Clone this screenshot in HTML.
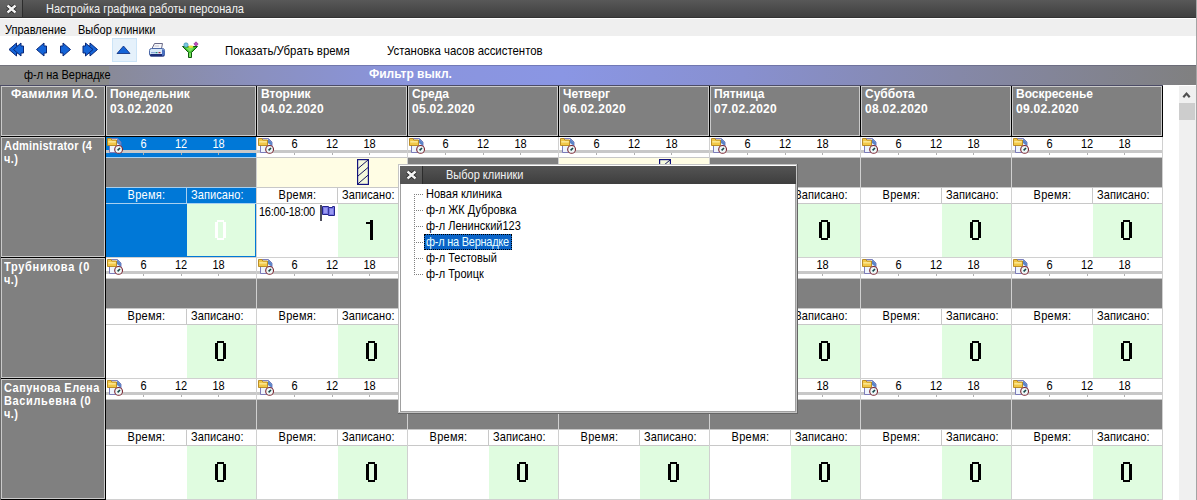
<!DOCTYPE html>
<html><head><meta charset="utf-8"><style>
html,body{margin:0;padding:0}
body{width:1197px;height:500px;position:relative;overflow:hidden;background:#fff;font-family:"Liberation Sans",sans-serif}
body>div,body>span,body>svg{position:absolute}
.t{white-space:nowrap;line-height:1.15}
div{box-sizing:border-box}
</style></head><body>
<div style="left:0px;top:0px;width:1197px;height:18px;background:linear-gradient(#585858,#3e3e3e)"></div>
<div style="left:0px;top:0px;width:22px;height:18px;background:linear-gradient(#666,#555)"></div>
<div style="left:22px;top:0px;width:1px;height:18px;background:#2c2c2c"></div>
<div style="left:0px;top:17px;width:1197px;height:1px;background:#333"></div>
<svg style="position:absolute;left:6px;top:4px" width="11" height="10" viewBox="0 0 11 10"><path d="M1.5 1.5 L9.5 8.5 M9.5 1.5 L1.5 8.5" stroke="#1e1e1e" stroke-width="4" stroke-linecap="butt"/><path d="M1.5 1.5 L9.5 8.5 M9.5 1.5 L1.5 8.5" stroke="#f4f4f4" stroke-width="2.4" stroke-linecap="butt"/></svg>
<span class="t" style="left:46px;top:3px;font-size:11px;font-weight:normal;color:#f2f2f2;transform:scaleY(1.12);transform-origin:0 10px;">Настройка графика работы персонала</span>
<div style="left:0px;top:18px;width:1197px;height:1px;background:#fff"></div>
<div style="left:0px;top:19px;width:1197px;height:17px;background:#efefef"></div>
<span class="t" style="left:5px;top:24px;font-size:11px;font-weight:normal;color:#000;transform:scaleY(1.12);transform-origin:0 10px;">Управление</span>
<span class="t" style="left:78px;top:24px;font-size:11px;font-weight:normal;color:#000;transform:scaleY(1.12);transform-origin:0 10px;">Выбор клиники</span>
<div style="left:0px;top:36px;width:1197px;height:29px;background:#fff"></div>
<svg style="position:absolute;left:0;top:0" width="210" height="64"><path d="M9 49.5 L16.5 43 L16.5 46 L19 46 L19 53 L16.5 53 L16.5 56 Z" fill="#1464d8" stroke="#0a2878" stroke-width="1"/><path d="M13.5 49.5 L21.0 43 L21.0 46 L23.5 46 L23.5 53 L21.0 53 L21.0 56 Z" fill="#1464d8" stroke="#0a2878" stroke-width="1"/><path d="M36.5 49.5 L44.0 43 L44.0 46 L46.5 46 L46.5 53 L44.0 53 L44.0 56 Z" fill="#1464d8" stroke="#0a2878" stroke-width="1"/><path d="M70.5 49.5 L63.0 43 L63.0 46 L60.5 46 L60.5 53 L63.0 53 L63.0 56 Z" fill="#1464d8" stroke="#0a2878" stroke-width="1"/><path d="M97.5 49.5 L90.0 43 L90.0 46 L87.5 46 L87.5 53 L90.0 53 L90.0 56 Z" fill="#1464d8" stroke="#0a2878" stroke-width="1"/><path d="M93 49.5 L85.5 43 L85.5 46 L83 46 L83 53 L85.5 53 L85.5 56 Z" fill="#1464d8" stroke="#0a2878" stroke-width="1"/><rect x="112.5" y="38.5" width="24" height="23" fill="#e5f1fb" stroke="#cce4f7"/><path d="M117 53.5 L123.5 46 L130 53.5 Z" fill="#1464d8" stroke="#0a2878" stroke-width="0.8"/><path d="M154.5 43.5 L162.5 43.5 L161.5 48.5 L152 48.5 Z" fill="#f6f6f8" stroke="#6a6a88" stroke-width="1"/><path d="M154.5 46 H159" stroke="#b8b8c8" stroke-width="0.8"/><rect x="149.5" y="48.5" width="15" height="7.5" rx="2" fill="#d8e8f8" stroke="#4a68a8" stroke-width="1"/><rect x="150" y="54" width="14.5" height="2.5" rx="1" fill="#1c2c78"/><path d="M162 49 L164.5 50.5 L164.5 55 L162 56 Z" fill="#4a70c0"/><rect x="151" y="52" width="4" height="1.2" fill="#8aa8d8"/><rect x="155.5" y="52" width="2" height="1.2" fill="#208878"/><rect x="158.5" y="52" width="2" height="1.2" fill="#a02040"/><path d="M182.5 46.5 L197.5 46.5 L191.5 52.5 L191.5 57.5 L188.5 57.5 L188.5 52.5 Z" fill="#3cbc2c" stroke="#0e5a0e" stroke-width="1" stroke-linejoin="round"/><path d="M186 48 L194 48 L190.5 51.5 L189.5 51.5 Z" fill="#80e060"/><rect x="189.3" y="53" width="1.4" height="4" fill="#90f070"/><ellipse cx="190.8" cy="46.8" rx="2.6" ry="1.3" fill="#e8e040"/><circle cx="186" cy="45" r="2.2" fill="#78c8e0" stroke="#3a88a8" stroke-width="0.6"/><path d="M196 41.8 L198.2 44 L196 46.2 L193.8 44 Z" fill="#c048c0" stroke="#802080" stroke-width="0.6"/></svg>
<span class="t" style="left:225px;top:45px;font-size:11.4px;font-weight:normal;color:#000;transform:scaleY(1.12);transform-origin:0 10px;">Показать/Убрать время</span>
<span class="t" style="left:387px;top:45px;font-size:11.4px;font-weight:normal;color:#000;transform:scaleY(1.12);transform-origin:0 10px;">Установка часов ассистентов</span>
<div style="left:0px;top:65px;width:1197px;height:21px;background:linear-gradient(to right,#8b8b8b 0%,#898a98 9%,#8a90c0 22%,#8a94dc 33%,#8a96e4 47%,#8890d0 62%,#8588a8 80%,#808080 100%)"></div>
<div style="left:0px;top:66px;width:109px;height:19px;background:#8a8a8a"></div>
<div style="left:0px;top:65px;width:1197px;height:1px;background:rgba(60,60,90,0.3)"></div>
<span class="t" style="left:24px;top:69px;font-size:11px;font-weight:normal;color:#000;transform:scaleY(1.12);transform-origin:0 10px;">ф-л на Вернадке</span>
<span class="t" style="left:369px;top:68px;font-size:12px;font-weight:bold;color:#fff;">Фильтр выкл.</span>
<div style="left:0px;top:85px;width:1163px;height:415px;background:#000"></div>
<div style="left:0px;top:85px;width:1197px;height:1px;background:#4c4c66"></div>
<div style="left:0px;top:86px;width:1px;height:414px;background:#6a6a6a"></div>
<div style="left:1px;top:86px;width:104px;height:50px;background:#808080;border:1px solid #cacaca"></div>
<div style="left:106px;top:86px;width:150px;height:50px;background:#808080;border:1px solid #cacaca"></div>
<span class="t" style="left:110px;top:88px;font-size:12px;font-weight:bold;color:#fff;">Понедельник</span>
<span class="t" style="left:110px;top:103px;font-size:12px;font-weight:bold;color:#fff;letter-spacing:0.3px">03.02.2020</span>
<div style="left:257px;top:86px;width:150px;height:50px;background:#808080;border:1px solid #cacaca"></div>
<span class="t" style="left:261px;top:88px;font-size:12px;font-weight:bold;color:#fff;">Вторник</span>
<span class="t" style="left:261px;top:103px;font-size:12px;font-weight:bold;color:#fff;letter-spacing:0.3px">04.02.2020</span>
<div style="left:408px;top:86px;width:150px;height:50px;background:#808080;border:1px solid #cacaca"></div>
<span class="t" style="left:412px;top:88px;font-size:12px;font-weight:bold;color:#fff;">Среда</span>
<span class="t" style="left:412px;top:103px;font-size:12px;font-weight:bold;color:#fff;letter-spacing:0.3px">05.02.2020</span>
<div style="left:559px;top:86px;width:150px;height:50px;background:#808080;border:1px solid #cacaca"></div>
<span class="t" style="left:563px;top:88px;font-size:12px;font-weight:bold;color:#fff;">Четверг</span>
<span class="t" style="left:563px;top:103px;font-size:12px;font-weight:bold;color:#fff;letter-spacing:0.3px">06.02.2020</span>
<div style="left:710px;top:86px;width:150px;height:50px;background:#808080;border:1px solid #cacaca"></div>
<span class="t" style="left:714px;top:88px;font-size:12px;font-weight:bold;color:#fff;">Пятница</span>
<span class="t" style="left:714px;top:103px;font-size:12px;font-weight:bold;color:#fff;letter-spacing:0.3px">07.02.2020</span>
<div style="left:861px;top:86px;width:150px;height:50px;background:#808080;border:1px solid #cacaca"></div>
<span class="t" style="left:865px;top:88px;font-size:12px;font-weight:bold;color:#fff;">Суббота</span>
<span class="t" style="left:865px;top:103px;font-size:12px;font-weight:bold;color:#fff;letter-spacing:0.3px">08.02.2020</span>
<div style="left:1012px;top:86px;width:150px;height:50px;background:#808080;border:1px solid #cacaca"></div>
<span class="t" style="left:1016px;top:88px;font-size:12px;font-weight:bold;color:#fff;">Воскресенье</span>
<span class="t" style="left:1016px;top:103px;font-size:12px;font-weight:bold;color:#fff;letter-spacing:0.3px">09.02.2020</span>
<span class="t" style="left:11px;top:88px;font-size:12px;font-weight:bold;color:#fff;letter-spacing:0.3px">Фамилия И.О.</span>
<div style="left:1px;top:137px;width:104px;height:120px;background:#808080;border:1px solid #cacaca"></div>
<span class="t" style="left:4px;top:140px;font-size:11px;font-weight:bold;color:#fff;transform:scaleY(1.12);transform-origin:0 10px;letter-spacing:0.2px">Administrator (4</span>
<span class="t" style="left:4px;top:153px;font-size:11px;font-weight:bold;color:#fff;transform:scaleY(1.12);transform-origin:0 10px;letter-spacing:0.4px">ч.)</span>
<div style="left:1px;top:258px;width:104px;height:120px;background:#808080;border:1px solid #cacaca"></div>
<span class="t" style="left:4px;top:261px;font-size:11px;font-weight:bold;color:#fff;transform:scaleY(1.12);transform-origin:0 10px;letter-spacing:0.7px">Трубникова (0</span>
<span class="t" style="left:4px;top:274px;font-size:11px;font-weight:bold;color:#fff;transform:scaleY(1.12);transform-origin:0 10px;letter-spacing:0.4px">ч.)</span>
<div style="left:1px;top:379px;width:104px;height:120px;background:#808080;border:1px solid #cacaca"></div>
<span class="t" style="left:4px;top:382px;font-size:11px;font-weight:bold;color:#fff;transform:scaleY(1.12);transform-origin:0 10px;letter-spacing:0.47px">Сапунова Елена</span>
<span class="t" style="left:4px;top:395px;font-size:11px;font-weight:bold;color:#fff;transform:scaleY(1.12);transform-origin:0 10px;letter-spacing:0.63px">Васильевна (0</span>
<span class="t" style="left:4px;top:408px;font-size:11px;font-weight:bold;color:#fff;transform:scaleY(1.12);transform-origin:0 10px;letter-spacing:0.4px">ч.)</span>
<div style="left:106px;top:137px;width:150px;height:120px;background:#0078d7"></div>
<div style="left:106px;top:150px;width:150px;height:3px;background:#c8c8c8"></div>
<div style="left:143px;top:153px;width:1px;height:2px;background:#b0b0b0"></div>
<span class="t" style="left:140.0px;top:137px;width:7px;text-align:center;font-size:11px;transform:scaleY(1.12);transform-origin:0 0;color:#fff">6</span>
<div style="left:181px;top:153px;width:1px;height:2px;background:#b0b0b0"></div>
<span class="t" style="left:174.5px;top:137px;width:13px;text-align:center;font-size:11px;transform:scaleY(1.12);transform-origin:0 0;color:#fff">12</span>
<div style="left:218px;top:153px;width:1px;height:2px;background:#b0b0b0"></div>
<span class="t" style="left:212.0px;top:137px;width:13px;text-align:center;font-size:11px;transform:scaleY(1.12);transform-origin:0 0;color:#fff">18</span>
<div style="left:106px;top:157px;width:150px;height:1px;background:#a8d0f0"></div>
<svg style="position:absolute;left:106px;top:137px" width="17" height="17" viewBox="0 0 17 17">
<path d="M3.5 1.5 L11.5 1.5 L15 5 L15 15.5 L3.5 15.5 Z" fill="#eef4fc" stroke="#7070b4" stroke-width="0.9"/>
<path d="M11 1.5 L15 5.5 L15 9 L11 6 Z" fill="#5a84c8"/>
<path d="M1.5 1.5 L5 1.5 L5.8 3 L10.5 3 L10.5 8.5 L1.5 8.5 Z" fill="#f2c848" stroke="#b48418" stroke-width="0.9"/>
<rect x="2.3" y="4" width="7.5" height="1.6" fill="#fae690"/>
<circle cx="12.6" cy="12.4" r="3.9" fill="#eef8f8" stroke="#7c2430" stroke-width="1.1"/>
<path d="M11.6 13.4 L14 11" stroke="#184848" stroke-width="1.6"/>
</svg>
<div style="left:106px;top:158px;width:150px;height:29px;background:#808080"></div>
<div style="left:106px;top:187px;width:150px;height:1px;background:#a8d0f0"></div>
<div style="left:106px;top:188px;width:150px;height:15px;background:#0078d7"></div>
<div style="left:186px;top:188px;width:1px;height:15px;background:#a8d0f0"></div>
<span class="t" style="left:106px;top:189px;width:81px;text-align:center;letter-spacing:0.3px;font-size:11px;transform:scaleY(1.12);transform-origin:0 10px;color:#fff">Время:</span>
<span class="t" style="left:191px;top:189px;letter-spacing:0.1px;font-size:11px;transform:scaleY(1.12);transform-origin:0 10px;color:#fff">Записано:</span>
<div style="left:106px;top:203px;width:150px;height:1px;background:#a8d0f0"></div>
<div style="left:106px;top:204px;width:80px;height:53px;background:#0078d7"></div>
<div style="left:187px;top:204px;width:69px;height:53px;background:#e0fce0"></div>
<div style="left:255px;top:204px;width:1px;height:53px;background:#0078d7"></div>
<div style="left:187px;top:256px;width:69px;height:1px;background:#0078d7"></div>
<svg style="position:absolute;left:215px;top:220px" width="11" height="20" shape-rendering="crispEdges"><g fill="#fff"><rect x="2" y="0" width="7" height="2"/><rect x="0" y="2" width="3" height="16"/><rect x="8" y="2" width="3" height="16"/><rect x="2" y="18" width="7" height="2"/></g></svg>
<div style="left:256px;top:137px;width:1px;height:121px;background:#d0d0d0"></div>
<div style="left:106px;top:257px;width:151px;height:1px;background:#d0d0d0"></div>
<div style="left:257px;top:137px;width:150px;height:120px;background:#fff"></div>
<div style="left:257px;top:150px;width:150px;height:3px;background:#c8c8c8"></div>
<div style="left:294px;top:153px;width:1px;height:2px;background:#b0b0b0"></div>
<span class="t" style="left:291.0px;top:137px;width:7px;text-align:center;font-size:11px;transform:scaleY(1.12);transform-origin:0 0;color:#000">6</span>
<div style="left:332px;top:153px;width:1px;height:2px;background:#b0b0b0"></div>
<span class="t" style="left:325.5px;top:137px;width:13px;text-align:center;font-size:11px;transform:scaleY(1.12);transform-origin:0 0;color:#000">12</span>
<div style="left:369px;top:153px;width:1px;height:2px;background:#b0b0b0"></div>
<span class="t" style="left:363.0px;top:137px;width:13px;text-align:center;font-size:11px;transform:scaleY(1.12);transform-origin:0 0;color:#000">18</span>
<div style="left:257px;top:157px;width:150px;height:1px;background:#c8c8c8"></div>
<svg style="position:absolute;left:257px;top:137px" width="17" height="17" viewBox="0 0 17 17">
<path d="M3.5 1.5 L11.5 1.5 L15 5 L15 15.5 L3.5 15.5 Z" fill="#eef4fc" stroke="#7070b4" stroke-width="0.9"/>
<path d="M11 1.5 L15 5.5 L15 9 L11 6 Z" fill="#5a84c8"/>
<path d="M1.5 1.5 L5 1.5 L5.8 3 L10.5 3 L10.5 8.5 L1.5 8.5 Z" fill="#f2c848" stroke="#b48418" stroke-width="0.9"/>
<rect x="2.3" y="4" width="7.5" height="1.6" fill="#fae690"/>
<circle cx="12.6" cy="12.4" r="3.9" fill="#eef8f8" stroke="#7c2430" stroke-width="1.1"/>
<path d="M11.6 13.4 L14 11" stroke="#184848" stroke-width="1.6"/>
</svg>
<div style="left:257px;top:158px;width:150px;height:29px;background:#fffde4"></div>
<svg style="position:absolute;left:357px;top:159px" width="12" height="26" viewBox="0 0 12 26"><rect x="0.6" y="0.6" width="10.8" height="24.8" fill="#f4f9dc" stroke="#141480" stroke-width="1.2"/><path d="M1 9.5 L11 1 M1 17 L11 8.5 M1 24.8 L11 16.2" stroke="#161660" stroke-width="1"/></svg>
<div style="left:257px;top:187px;width:150px;height:1px;background:#c8c8c8"></div>
<div style="left:257px;top:188px;width:150px;height:15px;background:#fff"></div>
<div style="left:337px;top:188px;width:1px;height:15px;background:#c8c8c8"></div>
<span class="t" style="left:257px;top:189px;width:81px;text-align:center;letter-spacing:0.3px;font-size:11px;transform:scaleY(1.12);transform-origin:0 10px;color:#000">Время:</span>
<span class="t" style="left:342px;top:189px;letter-spacing:0.1px;font-size:11px;transform:scaleY(1.12);transform-origin:0 10px;color:#000">Записано:</span>
<div style="left:257px;top:203px;width:150px;height:1px;background:#c8c8c8"></div>
<div style="left:257px;top:204px;width:80px;height:53px;background:#fff"></div>
<div style="left:338px;top:204px;width:69px;height:53px;background:#e0fce0"></div>
<svg style="position:absolute;left:366px;top:220px" width="7" height="20" shape-rendering="crispEdges"><g fill="#000"><rect x="4" y="0" width="3" height="20"/><rect x="0" y="2" width="4" height="2"/></g></svg>
<span class="t" style="left:259px;top:206px;font-size:11px;letter-spacing:-0.25px;transform:scaleY(1.12);transform-origin:0 10px;color:#000">16:00-18:00</span>
<svg style="position:absolute;left:320px;top:204px" width="17" height="18" viewBox="0 0 17 18"><rect x="0" y="1" width="2" height="16" fill="#4e4e5c"/><path d="M2.5 2.5 H8.5 V3.5 H12.5 V2.5 H14.5 V11.5 H8.5 V10.5 H2.5 Z" fill="#7878e6" stroke="#24248a" stroke-width="1"/><path d="M8.5 3.5 V10.5" stroke="#3a3aa0" stroke-width="1"/><rect x="4" y="4" width="3" height="5" fill="#9a9af0"/><rect x="10" y="5" width="3" height="5" fill="#9a9af0"/></svg>
<div style="left:407px;top:137px;width:1px;height:121px;background:#d0d0d0"></div>
<div style="left:257px;top:257px;width:151px;height:1px;background:#d0d0d0"></div>
<div style="left:408px;top:137px;width:150px;height:120px;background:#fff"></div>
<div style="left:408px;top:150px;width:150px;height:3px;background:#c8c8c8"></div>
<div style="left:445px;top:153px;width:1px;height:2px;background:#b0b0b0"></div>
<span class="t" style="left:442.0px;top:137px;width:7px;text-align:center;font-size:11px;transform:scaleY(1.12);transform-origin:0 0;color:#000">6</span>
<div style="left:483px;top:153px;width:1px;height:2px;background:#b0b0b0"></div>
<span class="t" style="left:476.5px;top:137px;width:13px;text-align:center;font-size:11px;transform:scaleY(1.12);transform-origin:0 0;color:#000">12</span>
<div style="left:520px;top:153px;width:1px;height:2px;background:#b0b0b0"></div>
<span class="t" style="left:514.0px;top:137px;width:13px;text-align:center;font-size:11px;transform:scaleY(1.12);transform-origin:0 0;color:#000">18</span>
<div style="left:408px;top:157px;width:150px;height:1px;background:#c8c8c8"></div>
<svg style="position:absolute;left:408px;top:137px" width="17" height="17" viewBox="0 0 17 17">
<path d="M3.5 1.5 L11.5 1.5 L15 5 L15 15.5 L3.5 15.5 Z" fill="#eef4fc" stroke="#7070b4" stroke-width="0.9"/>
<path d="M11 1.5 L15 5.5 L15 9 L11 6 Z" fill="#5a84c8"/>
<path d="M1.5 1.5 L5 1.5 L5.8 3 L10.5 3 L10.5 8.5 L1.5 8.5 Z" fill="#f2c848" stroke="#b48418" stroke-width="0.9"/>
<rect x="2.3" y="4" width="7.5" height="1.6" fill="#fae690"/>
<circle cx="12.6" cy="12.4" r="3.9" fill="#eef8f8" stroke="#7c2430" stroke-width="1.1"/>
<path d="M11.6 13.4 L14 11" stroke="#184848" stroke-width="1.6"/>
</svg>
<div style="left:408px;top:158px;width:150px;height:29px;background:#808080"></div>
<div style="left:408px;top:187px;width:150px;height:1px;background:#c8c8c8"></div>
<div style="left:408px;top:188px;width:150px;height:15px;background:#fff"></div>
<div style="left:488px;top:188px;width:1px;height:15px;background:#c8c8c8"></div>
<span class="t" style="left:408px;top:189px;width:81px;text-align:center;letter-spacing:0.3px;font-size:11px;transform:scaleY(1.12);transform-origin:0 10px;color:#000">Время:</span>
<span class="t" style="left:493px;top:189px;letter-spacing:0.1px;font-size:11px;transform:scaleY(1.12);transform-origin:0 10px;color:#000">Записано:</span>
<div style="left:408px;top:203px;width:150px;height:1px;background:#c8c8c8"></div>
<div style="left:408px;top:204px;width:80px;height:53px;background:#fff"></div>
<div style="left:489px;top:204px;width:69px;height:53px;background:#e0fce0"></div>
<svg style="position:absolute;left:517px;top:220px" width="11" height="20" shape-rendering="crispEdges"><g fill="#000"><rect x="2" y="0" width="7" height="2"/><rect x="0" y="2" width="3" height="16"/><rect x="8" y="2" width="3" height="16"/><rect x="2" y="18" width="7" height="2"/></g></svg>
<div style="left:558px;top:137px;width:1px;height:121px;background:#d0d0d0"></div>
<div style="left:408px;top:257px;width:151px;height:1px;background:#d0d0d0"></div>
<div style="left:559px;top:137px;width:150px;height:120px;background:#fff"></div>
<div style="left:559px;top:150px;width:150px;height:3px;background:#c8c8c8"></div>
<div style="left:596px;top:153px;width:1px;height:2px;background:#b0b0b0"></div>
<span class="t" style="left:593.0px;top:137px;width:7px;text-align:center;font-size:11px;transform:scaleY(1.12);transform-origin:0 0;color:#000">6</span>
<div style="left:634px;top:153px;width:1px;height:2px;background:#b0b0b0"></div>
<span class="t" style="left:627.5px;top:137px;width:13px;text-align:center;font-size:11px;transform:scaleY(1.12);transform-origin:0 0;color:#000">12</span>
<div style="left:671px;top:153px;width:1px;height:2px;background:#b0b0b0"></div>
<span class="t" style="left:665.0px;top:137px;width:13px;text-align:center;font-size:11px;transform:scaleY(1.12);transform-origin:0 0;color:#000">18</span>
<div style="left:559px;top:157px;width:150px;height:1px;background:#c8c8c8"></div>
<svg style="position:absolute;left:559px;top:137px" width="17" height="17" viewBox="0 0 17 17">
<path d="M3.5 1.5 L11.5 1.5 L15 5 L15 15.5 L3.5 15.5 Z" fill="#eef4fc" stroke="#7070b4" stroke-width="0.9"/>
<path d="M11 1.5 L15 5.5 L15 9 L11 6 Z" fill="#5a84c8"/>
<path d="M1.5 1.5 L5 1.5 L5.8 3 L10.5 3 L10.5 8.5 L1.5 8.5 Z" fill="#f2c848" stroke="#b48418" stroke-width="0.9"/>
<rect x="2.3" y="4" width="7.5" height="1.6" fill="#fae690"/>
<circle cx="12.6" cy="12.4" r="3.9" fill="#eef8f8" stroke="#7c2430" stroke-width="1.1"/>
<path d="M11.6 13.4 L14 11" stroke="#184848" stroke-width="1.6"/>
</svg>
<div style="left:559px;top:158px;width:150px;height:29px;background:#fffde4"></div>
<svg style="position:absolute;left:659px;top:159px" width="12" height="26" viewBox="0 0 12 26"><rect x="0.6" y="0.6" width="10.8" height="24.8" fill="#f4f9dc" stroke="#141480" stroke-width="1.2"/><path d="M1 9.5 L11 1 M1 17 L11 8.5 M1 24.8 L11 16.2" stroke="#161660" stroke-width="1"/></svg>
<div style="left:559px;top:187px;width:150px;height:1px;background:#c8c8c8"></div>
<div style="left:559px;top:188px;width:150px;height:15px;background:#fff"></div>
<div style="left:639px;top:188px;width:1px;height:15px;background:#c8c8c8"></div>
<span class="t" style="left:559px;top:189px;width:81px;text-align:center;letter-spacing:0.3px;font-size:11px;transform:scaleY(1.12);transform-origin:0 10px;color:#000">Время:</span>
<span class="t" style="left:644px;top:189px;letter-spacing:0.1px;font-size:11px;transform:scaleY(1.12);transform-origin:0 10px;color:#000">Записано:</span>
<div style="left:559px;top:203px;width:150px;height:1px;background:#c8c8c8"></div>
<div style="left:559px;top:204px;width:80px;height:53px;background:#fff"></div>
<div style="left:640px;top:204px;width:69px;height:53px;background:#e0fce0"></div>
<svg style="position:absolute;left:668px;top:220px" width="7" height="20" shape-rendering="crispEdges"><g fill="#000"><rect x="4" y="0" width="3" height="20"/><rect x="0" y="2" width="4" height="2"/></g></svg>
<span class="t" style="left:561px;top:206px;font-size:11px;letter-spacing:-0.25px;transform:scaleY(1.12);transform-origin:0 10px;color:#000">16:00-18:00</span>
<svg style="position:absolute;left:622px;top:204px" width="17" height="18" viewBox="0 0 17 18"><rect x="0" y="1" width="2" height="16" fill="#4e4e5c"/><path d="M2.5 2.5 H8.5 V3.5 H12.5 V2.5 H14.5 V11.5 H8.5 V10.5 H2.5 Z" fill="#7878e6" stroke="#24248a" stroke-width="1"/><path d="M8.5 3.5 V10.5" stroke="#3a3aa0" stroke-width="1"/><rect x="4" y="4" width="3" height="5" fill="#9a9af0"/><rect x="10" y="5" width="3" height="5" fill="#9a9af0"/></svg>
<div style="left:709px;top:137px;width:1px;height:121px;background:#d0d0d0"></div>
<div style="left:559px;top:257px;width:151px;height:1px;background:#d0d0d0"></div>
<div style="left:710px;top:137px;width:150px;height:120px;background:#fff"></div>
<div style="left:710px;top:150px;width:150px;height:3px;background:#c8c8c8"></div>
<div style="left:747px;top:153px;width:1px;height:2px;background:#b0b0b0"></div>
<span class="t" style="left:744.0px;top:137px;width:7px;text-align:center;font-size:11px;transform:scaleY(1.12);transform-origin:0 0;color:#000">6</span>
<div style="left:785px;top:153px;width:1px;height:2px;background:#b0b0b0"></div>
<span class="t" style="left:778.5px;top:137px;width:13px;text-align:center;font-size:11px;transform:scaleY(1.12);transform-origin:0 0;color:#000">12</span>
<div style="left:822px;top:153px;width:1px;height:2px;background:#b0b0b0"></div>
<span class="t" style="left:816.0px;top:137px;width:13px;text-align:center;font-size:11px;transform:scaleY(1.12);transform-origin:0 0;color:#000">18</span>
<div style="left:710px;top:157px;width:150px;height:1px;background:#c8c8c8"></div>
<svg style="position:absolute;left:710px;top:137px" width="17" height="17" viewBox="0 0 17 17">
<path d="M3.5 1.5 L11.5 1.5 L15 5 L15 15.5 L3.5 15.5 Z" fill="#eef4fc" stroke="#7070b4" stroke-width="0.9"/>
<path d="M11 1.5 L15 5.5 L15 9 L11 6 Z" fill="#5a84c8"/>
<path d="M1.5 1.5 L5 1.5 L5.8 3 L10.5 3 L10.5 8.5 L1.5 8.5 Z" fill="#f2c848" stroke="#b48418" stroke-width="0.9"/>
<rect x="2.3" y="4" width="7.5" height="1.6" fill="#fae690"/>
<circle cx="12.6" cy="12.4" r="3.9" fill="#eef8f8" stroke="#7c2430" stroke-width="1.1"/>
<path d="M11.6 13.4 L14 11" stroke="#184848" stroke-width="1.6"/>
</svg>
<div style="left:710px;top:158px;width:150px;height:29px;background:#808080"></div>
<div style="left:710px;top:187px;width:150px;height:1px;background:#c8c8c8"></div>
<div style="left:710px;top:188px;width:150px;height:15px;background:#fff"></div>
<div style="left:790px;top:188px;width:1px;height:15px;background:#c8c8c8"></div>
<span class="t" style="left:710px;top:189px;width:81px;text-align:center;letter-spacing:0.3px;font-size:11px;transform:scaleY(1.12);transform-origin:0 10px;color:#000">Время:</span>
<span class="t" style="left:795px;top:189px;letter-spacing:0.1px;font-size:11px;transform:scaleY(1.12);transform-origin:0 10px;color:#000">Записано:</span>
<div style="left:710px;top:203px;width:150px;height:1px;background:#c8c8c8"></div>
<div style="left:710px;top:204px;width:80px;height:53px;background:#fff"></div>
<div style="left:791px;top:204px;width:69px;height:53px;background:#e0fce0"></div>
<svg style="position:absolute;left:819px;top:220px" width="11" height="20" shape-rendering="crispEdges"><g fill="#000"><rect x="2" y="0" width="7" height="2"/><rect x="0" y="2" width="3" height="16"/><rect x="8" y="2" width="3" height="16"/><rect x="2" y="18" width="7" height="2"/></g></svg>
<div style="left:860px;top:137px;width:1px;height:121px;background:#d0d0d0"></div>
<div style="left:710px;top:257px;width:151px;height:1px;background:#d0d0d0"></div>
<div style="left:861px;top:137px;width:150px;height:120px;background:#fff"></div>
<div style="left:861px;top:150px;width:150px;height:3px;background:#c8c8c8"></div>
<div style="left:898px;top:153px;width:1px;height:2px;background:#b0b0b0"></div>
<span class="t" style="left:895.0px;top:137px;width:7px;text-align:center;font-size:11px;transform:scaleY(1.12);transform-origin:0 0;color:#000">6</span>
<div style="left:936px;top:153px;width:1px;height:2px;background:#b0b0b0"></div>
<span class="t" style="left:929.5px;top:137px;width:13px;text-align:center;font-size:11px;transform:scaleY(1.12);transform-origin:0 0;color:#000">12</span>
<div style="left:973px;top:153px;width:1px;height:2px;background:#b0b0b0"></div>
<span class="t" style="left:967.0px;top:137px;width:13px;text-align:center;font-size:11px;transform:scaleY(1.12);transform-origin:0 0;color:#000">18</span>
<div style="left:861px;top:157px;width:150px;height:1px;background:#c8c8c8"></div>
<svg style="position:absolute;left:861px;top:137px" width="17" height="17" viewBox="0 0 17 17">
<path d="M3.5 1.5 L11.5 1.5 L15 5 L15 15.5 L3.5 15.5 Z" fill="#eef4fc" stroke="#7070b4" stroke-width="0.9"/>
<path d="M11 1.5 L15 5.5 L15 9 L11 6 Z" fill="#5a84c8"/>
<path d="M1.5 1.5 L5 1.5 L5.8 3 L10.5 3 L10.5 8.5 L1.5 8.5 Z" fill="#f2c848" stroke="#b48418" stroke-width="0.9"/>
<rect x="2.3" y="4" width="7.5" height="1.6" fill="#fae690"/>
<circle cx="12.6" cy="12.4" r="3.9" fill="#eef8f8" stroke="#7c2430" stroke-width="1.1"/>
<path d="M11.6 13.4 L14 11" stroke="#184848" stroke-width="1.6"/>
</svg>
<div style="left:861px;top:158px;width:150px;height:29px;background:#808080"></div>
<div style="left:861px;top:187px;width:150px;height:1px;background:#c8c8c8"></div>
<div style="left:861px;top:188px;width:150px;height:15px;background:#fff"></div>
<div style="left:941px;top:188px;width:1px;height:15px;background:#c8c8c8"></div>
<span class="t" style="left:861px;top:189px;width:81px;text-align:center;letter-spacing:0.3px;font-size:11px;transform:scaleY(1.12);transform-origin:0 10px;color:#000">Время:</span>
<span class="t" style="left:946px;top:189px;letter-spacing:0.1px;font-size:11px;transform:scaleY(1.12);transform-origin:0 10px;color:#000">Записано:</span>
<div style="left:861px;top:203px;width:150px;height:1px;background:#c8c8c8"></div>
<div style="left:861px;top:204px;width:80px;height:53px;background:#fff"></div>
<div style="left:942px;top:204px;width:69px;height:53px;background:#e0fce0"></div>
<svg style="position:absolute;left:970px;top:220px" width="11" height="20" shape-rendering="crispEdges"><g fill="#000"><rect x="2" y="0" width="7" height="2"/><rect x="0" y="2" width="3" height="16"/><rect x="8" y="2" width="3" height="16"/><rect x="2" y="18" width="7" height="2"/></g></svg>
<div style="left:1011px;top:137px;width:1px;height:121px;background:#d0d0d0"></div>
<div style="left:861px;top:257px;width:151px;height:1px;background:#d0d0d0"></div>
<div style="left:1012px;top:137px;width:150px;height:120px;background:#fff"></div>
<div style="left:1012px;top:150px;width:150px;height:3px;background:#c8c8c8"></div>
<div style="left:1049px;top:153px;width:1px;height:2px;background:#b0b0b0"></div>
<span class="t" style="left:1046.0px;top:137px;width:7px;text-align:center;font-size:11px;transform:scaleY(1.12);transform-origin:0 0;color:#000">6</span>
<div style="left:1087px;top:153px;width:1px;height:2px;background:#b0b0b0"></div>
<span class="t" style="left:1080.5px;top:137px;width:13px;text-align:center;font-size:11px;transform:scaleY(1.12);transform-origin:0 0;color:#000">12</span>
<div style="left:1124px;top:153px;width:1px;height:2px;background:#b0b0b0"></div>
<span class="t" style="left:1118.0px;top:137px;width:13px;text-align:center;font-size:11px;transform:scaleY(1.12);transform-origin:0 0;color:#000">18</span>
<div style="left:1012px;top:157px;width:150px;height:1px;background:#c8c8c8"></div>
<svg style="position:absolute;left:1012px;top:137px" width="17" height="17" viewBox="0 0 17 17">
<path d="M3.5 1.5 L11.5 1.5 L15 5 L15 15.5 L3.5 15.5 Z" fill="#eef4fc" stroke="#7070b4" stroke-width="0.9"/>
<path d="M11 1.5 L15 5.5 L15 9 L11 6 Z" fill="#5a84c8"/>
<path d="M1.5 1.5 L5 1.5 L5.8 3 L10.5 3 L10.5 8.5 L1.5 8.5 Z" fill="#f2c848" stroke="#b48418" stroke-width="0.9"/>
<rect x="2.3" y="4" width="7.5" height="1.6" fill="#fae690"/>
<circle cx="12.6" cy="12.4" r="3.9" fill="#eef8f8" stroke="#7c2430" stroke-width="1.1"/>
<path d="M11.6 13.4 L14 11" stroke="#184848" stroke-width="1.6"/>
</svg>
<div style="left:1012px;top:158px;width:150px;height:29px;background:#808080"></div>
<div style="left:1012px;top:187px;width:150px;height:1px;background:#c8c8c8"></div>
<div style="left:1012px;top:188px;width:150px;height:15px;background:#fff"></div>
<div style="left:1092px;top:188px;width:1px;height:15px;background:#c8c8c8"></div>
<span class="t" style="left:1012px;top:189px;width:81px;text-align:center;letter-spacing:0.3px;font-size:11px;transform:scaleY(1.12);transform-origin:0 10px;color:#000">Время:</span>
<span class="t" style="left:1097px;top:189px;letter-spacing:0.1px;font-size:11px;transform:scaleY(1.12);transform-origin:0 10px;color:#000">Записано:</span>
<div style="left:1012px;top:203px;width:150px;height:1px;background:#c8c8c8"></div>
<div style="left:1012px;top:204px;width:80px;height:53px;background:#fff"></div>
<div style="left:1093px;top:204px;width:69px;height:53px;background:#e0fce0"></div>
<svg style="position:absolute;left:1121px;top:220px" width="11" height="20" shape-rendering="crispEdges"><g fill="#000"><rect x="2" y="0" width="7" height="2"/><rect x="0" y="2" width="3" height="16"/><rect x="8" y="2" width="3" height="16"/><rect x="2" y="18" width="7" height="2"/></g></svg>
<div style="left:1162px;top:137px;width:1px;height:121px;background:#d0d0d0"></div>
<div style="left:1012px;top:257px;width:151px;height:1px;background:#d0d0d0"></div>
<div style="left:106px;top:258px;width:150px;height:120px;background:#fff"></div>
<div style="left:106px;top:271px;width:150px;height:3px;background:#c8c8c8"></div>
<div style="left:143px;top:274px;width:1px;height:2px;background:#b0b0b0"></div>
<span class="t" style="left:140.0px;top:258px;width:7px;text-align:center;font-size:11px;transform:scaleY(1.12);transform-origin:0 0;color:#000">6</span>
<div style="left:181px;top:274px;width:1px;height:2px;background:#b0b0b0"></div>
<span class="t" style="left:174.5px;top:258px;width:13px;text-align:center;font-size:11px;transform:scaleY(1.12);transform-origin:0 0;color:#000">12</span>
<div style="left:218px;top:274px;width:1px;height:2px;background:#b0b0b0"></div>
<span class="t" style="left:212.0px;top:258px;width:13px;text-align:center;font-size:11px;transform:scaleY(1.12);transform-origin:0 0;color:#000">18</span>
<div style="left:106px;top:278px;width:150px;height:1px;background:#c8c8c8"></div>
<svg style="position:absolute;left:106px;top:258px" width="17" height="17" viewBox="0 0 17 17">
<path d="M3.5 1.5 L11.5 1.5 L15 5 L15 15.5 L3.5 15.5 Z" fill="#eef4fc" stroke="#7070b4" stroke-width="0.9"/>
<path d="M11 1.5 L15 5.5 L15 9 L11 6 Z" fill="#5a84c8"/>
<path d="M1.5 1.5 L5 1.5 L5.8 3 L10.5 3 L10.5 8.5 L1.5 8.5 Z" fill="#f2c848" stroke="#b48418" stroke-width="0.9"/>
<rect x="2.3" y="4" width="7.5" height="1.6" fill="#fae690"/>
<circle cx="12.6" cy="12.4" r="3.9" fill="#eef8f8" stroke="#7c2430" stroke-width="1.1"/>
<path d="M11.6 13.4 L14 11" stroke="#184848" stroke-width="1.6"/>
</svg>
<div style="left:106px;top:279px;width:150px;height:29px;background:#808080"></div>
<div style="left:106px;top:308px;width:150px;height:1px;background:#c8c8c8"></div>
<div style="left:106px;top:309px;width:150px;height:15px;background:#fff"></div>
<div style="left:186px;top:309px;width:1px;height:15px;background:#c8c8c8"></div>
<span class="t" style="left:106px;top:310px;width:81px;text-align:center;letter-spacing:0.3px;font-size:11px;transform:scaleY(1.12);transform-origin:0 10px;color:#000">Время:</span>
<span class="t" style="left:191px;top:310px;letter-spacing:0.1px;font-size:11px;transform:scaleY(1.12);transform-origin:0 10px;color:#000">Записано:</span>
<div style="left:106px;top:324px;width:150px;height:1px;background:#c8c8c8"></div>
<div style="left:106px;top:325px;width:80px;height:53px;background:#fff"></div>
<div style="left:187px;top:325px;width:69px;height:53px;background:#e0fce0"></div>
<svg style="position:absolute;left:215px;top:341px" width="11" height="20" shape-rendering="crispEdges"><g fill="#000"><rect x="2" y="0" width="7" height="2"/><rect x="0" y="2" width="3" height="16"/><rect x="8" y="2" width="3" height="16"/><rect x="2" y="18" width="7" height="2"/></g></svg>
<div style="left:256px;top:258px;width:1px;height:121px;background:#d0d0d0"></div>
<div style="left:106px;top:378px;width:151px;height:1px;background:#d0d0d0"></div>
<div style="left:257px;top:258px;width:150px;height:120px;background:#fff"></div>
<div style="left:257px;top:271px;width:150px;height:3px;background:#c8c8c8"></div>
<div style="left:294px;top:274px;width:1px;height:2px;background:#b0b0b0"></div>
<span class="t" style="left:291.0px;top:258px;width:7px;text-align:center;font-size:11px;transform:scaleY(1.12);transform-origin:0 0;color:#000">6</span>
<div style="left:332px;top:274px;width:1px;height:2px;background:#b0b0b0"></div>
<span class="t" style="left:325.5px;top:258px;width:13px;text-align:center;font-size:11px;transform:scaleY(1.12);transform-origin:0 0;color:#000">12</span>
<div style="left:369px;top:274px;width:1px;height:2px;background:#b0b0b0"></div>
<span class="t" style="left:363.0px;top:258px;width:13px;text-align:center;font-size:11px;transform:scaleY(1.12);transform-origin:0 0;color:#000">18</span>
<div style="left:257px;top:278px;width:150px;height:1px;background:#c8c8c8"></div>
<svg style="position:absolute;left:257px;top:258px" width="17" height="17" viewBox="0 0 17 17">
<path d="M3.5 1.5 L11.5 1.5 L15 5 L15 15.5 L3.5 15.5 Z" fill="#eef4fc" stroke="#7070b4" stroke-width="0.9"/>
<path d="M11 1.5 L15 5.5 L15 9 L11 6 Z" fill="#5a84c8"/>
<path d="M1.5 1.5 L5 1.5 L5.8 3 L10.5 3 L10.5 8.5 L1.5 8.5 Z" fill="#f2c848" stroke="#b48418" stroke-width="0.9"/>
<rect x="2.3" y="4" width="7.5" height="1.6" fill="#fae690"/>
<circle cx="12.6" cy="12.4" r="3.9" fill="#eef8f8" stroke="#7c2430" stroke-width="1.1"/>
<path d="M11.6 13.4 L14 11" stroke="#184848" stroke-width="1.6"/>
</svg>
<div style="left:257px;top:279px;width:150px;height:29px;background:#808080"></div>
<div style="left:257px;top:308px;width:150px;height:1px;background:#c8c8c8"></div>
<div style="left:257px;top:309px;width:150px;height:15px;background:#fff"></div>
<div style="left:337px;top:309px;width:1px;height:15px;background:#c8c8c8"></div>
<span class="t" style="left:257px;top:310px;width:81px;text-align:center;letter-spacing:0.3px;font-size:11px;transform:scaleY(1.12);transform-origin:0 10px;color:#000">Время:</span>
<span class="t" style="left:342px;top:310px;letter-spacing:0.1px;font-size:11px;transform:scaleY(1.12);transform-origin:0 10px;color:#000">Записано:</span>
<div style="left:257px;top:324px;width:150px;height:1px;background:#c8c8c8"></div>
<div style="left:257px;top:325px;width:80px;height:53px;background:#fff"></div>
<div style="left:338px;top:325px;width:69px;height:53px;background:#e0fce0"></div>
<svg style="position:absolute;left:366px;top:341px" width="11" height="20" shape-rendering="crispEdges"><g fill="#000"><rect x="2" y="0" width="7" height="2"/><rect x="0" y="2" width="3" height="16"/><rect x="8" y="2" width="3" height="16"/><rect x="2" y="18" width="7" height="2"/></g></svg>
<div style="left:407px;top:258px;width:1px;height:121px;background:#d0d0d0"></div>
<div style="left:257px;top:378px;width:151px;height:1px;background:#d0d0d0"></div>
<div style="left:408px;top:258px;width:150px;height:120px;background:#fff"></div>
<div style="left:408px;top:271px;width:150px;height:3px;background:#c8c8c8"></div>
<div style="left:445px;top:274px;width:1px;height:2px;background:#b0b0b0"></div>
<span class="t" style="left:442.0px;top:258px;width:7px;text-align:center;font-size:11px;transform:scaleY(1.12);transform-origin:0 0;color:#000">6</span>
<div style="left:483px;top:274px;width:1px;height:2px;background:#b0b0b0"></div>
<span class="t" style="left:476.5px;top:258px;width:13px;text-align:center;font-size:11px;transform:scaleY(1.12);transform-origin:0 0;color:#000">12</span>
<div style="left:520px;top:274px;width:1px;height:2px;background:#b0b0b0"></div>
<span class="t" style="left:514.0px;top:258px;width:13px;text-align:center;font-size:11px;transform:scaleY(1.12);transform-origin:0 0;color:#000">18</span>
<div style="left:408px;top:278px;width:150px;height:1px;background:#c8c8c8"></div>
<svg style="position:absolute;left:408px;top:258px" width="17" height="17" viewBox="0 0 17 17">
<path d="M3.5 1.5 L11.5 1.5 L15 5 L15 15.5 L3.5 15.5 Z" fill="#eef4fc" stroke="#7070b4" stroke-width="0.9"/>
<path d="M11 1.5 L15 5.5 L15 9 L11 6 Z" fill="#5a84c8"/>
<path d="M1.5 1.5 L5 1.5 L5.8 3 L10.5 3 L10.5 8.5 L1.5 8.5 Z" fill="#f2c848" stroke="#b48418" stroke-width="0.9"/>
<rect x="2.3" y="4" width="7.5" height="1.6" fill="#fae690"/>
<circle cx="12.6" cy="12.4" r="3.9" fill="#eef8f8" stroke="#7c2430" stroke-width="1.1"/>
<path d="M11.6 13.4 L14 11" stroke="#184848" stroke-width="1.6"/>
</svg>
<div style="left:408px;top:279px;width:150px;height:29px;background:#808080"></div>
<div style="left:408px;top:308px;width:150px;height:1px;background:#c8c8c8"></div>
<div style="left:408px;top:309px;width:150px;height:15px;background:#fff"></div>
<div style="left:488px;top:309px;width:1px;height:15px;background:#c8c8c8"></div>
<span class="t" style="left:408px;top:310px;width:81px;text-align:center;letter-spacing:0.3px;font-size:11px;transform:scaleY(1.12);transform-origin:0 10px;color:#000">Время:</span>
<span class="t" style="left:493px;top:310px;letter-spacing:0.1px;font-size:11px;transform:scaleY(1.12);transform-origin:0 10px;color:#000">Записано:</span>
<div style="left:408px;top:324px;width:150px;height:1px;background:#c8c8c8"></div>
<div style="left:408px;top:325px;width:80px;height:53px;background:#fff"></div>
<div style="left:489px;top:325px;width:69px;height:53px;background:#e0fce0"></div>
<svg style="position:absolute;left:517px;top:341px" width="11" height="20" shape-rendering="crispEdges"><g fill="#000"><rect x="2" y="0" width="7" height="2"/><rect x="0" y="2" width="3" height="16"/><rect x="8" y="2" width="3" height="16"/><rect x="2" y="18" width="7" height="2"/></g></svg>
<div style="left:558px;top:258px;width:1px;height:121px;background:#d0d0d0"></div>
<div style="left:408px;top:378px;width:151px;height:1px;background:#d0d0d0"></div>
<div style="left:559px;top:258px;width:150px;height:120px;background:#fff"></div>
<div style="left:559px;top:271px;width:150px;height:3px;background:#c8c8c8"></div>
<div style="left:596px;top:274px;width:1px;height:2px;background:#b0b0b0"></div>
<span class="t" style="left:593.0px;top:258px;width:7px;text-align:center;font-size:11px;transform:scaleY(1.12);transform-origin:0 0;color:#000">6</span>
<div style="left:634px;top:274px;width:1px;height:2px;background:#b0b0b0"></div>
<span class="t" style="left:627.5px;top:258px;width:13px;text-align:center;font-size:11px;transform:scaleY(1.12);transform-origin:0 0;color:#000">12</span>
<div style="left:671px;top:274px;width:1px;height:2px;background:#b0b0b0"></div>
<span class="t" style="left:665.0px;top:258px;width:13px;text-align:center;font-size:11px;transform:scaleY(1.12);transform-origin:0 0;color:#000">18</span>
<div style="left:559px;top:278px;width:150px;height:1px;background:#c8c8c8"></div>
<svg style="position:absolute;left:559px;top:258px" width="17" height="17" viewBox="0 0 17 17">
<path d="M3.5 1.5 L11.5 1.5 L15 5 L15 15.5 L3.5 15.5 Z" fill="#eef4fc" stroke="#7070b4" stroke-width="0.9"/>
<path d="M11 1.5 L15 5.5 L15 9 L11 6 Z" fill="#5a84c8"/>
<path d="M1.5 1.5 L5 1.5 L5.8 3 L10.5 3 L10.5 8.5 L1.5 8.5 Z" fill="#f2c848" stroke="#b48418" stroke-width="0.9"/>
<rect x="2.3" y="4" width="7.5" height="1.6" fill="#fae690"/>
<circle cx="12.6" cy="12.4" r="3.9" fill="#eef8f8" stroke="#7c2430" stroke-width="1.1"/>
<path d="M11.6 13.4 L14 11" stroke="#184848" stroke-width="1.6"/>
</svg>
<div style="left:559px;top:279px;width:150px;height:29px;background:#808080"></div>
<div style="left:559px;top:308px;width:150px;height:1px;background:#c8c8c8"></div>
<div style="left:559px;top:309px;width:150px;height:15px;background:#fff"></div>
<div style="left:639px;top:309px;width:1px;height:15px;background:#c8c8c8"></div>
<span class="t" style="left:559px;top:310px;width:81px;text-align:center;letter-spacing:0.3px;font-size:11px;transform:scaleY(1.12);transform-origin:0 10px;color:#000">Время:</span>
<span class="t" style="left:644px;top:310px;letter-spacing:0.1px;font-size:11px;transform:scaleY(1.12);transform-origin:0 10px;color:#000">Записано:</span>
<div style="left:559px;top:324px;width:150px;height:1px;background:#c8c8c8"></div>
<div style="left:559px;top:325px;width:80px;height:53px;background:#fff"></div>
<div style="left:640px;top:325px;width:69px;height:53px;background:#e0fce0"></div>
<svg style="position:absolute;left:668px;top:341px" width="11" height="20" shape-rendering="crispEdges"><g fill="#000"><rect x="2" y="0" width="7" height="2"/><rect x="0" y="2" width="3" height="16"/><rect x="8" y="2" width="3" height="16"/><rect x="2" y="18" width="7" height="2"/></g></svg>
<div style="left:709px;top:258px;width:1px;height:121px;background:#d0d0d0"></div>
<div style="left:559px;top:378px;width:151px;height:1px;background:#d0d0d0"></div>
<div style="left:710px;top:258px;width:150px;height:120px;background:#fff"></div>
<div style="left:710px;top:271px;width:150px;height:3px;background:#c8c8c8"></div>
<div style="left:747px;top:274px;width:1px;height:2px;background:#b0b0b0"></div>
<span class="t" style="left:744.0px;top:258px;width:7px;text-align:center;font-size:11px;transform:scaleY(1.12);transform-origin:0 0;color:#000">6</span>
<div style="left:785px;top:274px;width:1px;height:2px;background:#b0b0b0"></div>
<span class="t" style="left:778.5px;top:258px;width:13px;text-align:center;font-size:11px;transform:scaleY(1.12);transform-origin:0 0;color:#000">12</span>
<div style="left:822px;top:274px;width:1px;height:2px;background:#b0b0b0"></div>
<span class="t" style="left:816.0px;top:258px;width:13px;text-align:center;font-size:11px;transform:scaleY(1.12);transform-origin:0 0;color:#000">18</span>
<div style="left:710px;top:278px;width:150px;height:1px;background:#c8c8c8"></div>
<svg style="position:absolute;left:710px;top:258px" width="17" height="17" viewBox="0 0 17 17">
<path d="M3.5 1.5 L11.5 1.5 L15 5 L15 15.5 L3.5 15.5 Z" fill="#eef4fc" stroke="#7070b4" stroke-width="0.9"/>
<path d="M11 1.5 L15 5.5 L15 9 L11 6 Z" fill="#5a84c8"/>
<path d="M1.5 1.5 L5 1.5 L5.8 3 L10.5 3 L10.5 8.5 L1.5 8.5 Z" fill="#f2c848" stroke="#b48418" stroke-width="0.9"/>
<rect x="2.3" y="4" width="7.5" height="1.6" fill="#fae690"/>
<circle cx="12.6" cy="12.4" r="3.9" fill="#eef8f8" stroke="#7c2430" stroke-width="1.1"/>
<path d="M11.6 13.4 L14 11" stroke="#184848" stroke-width="1.6"/>
</svg>
<div style="left:710px;top:279px;width:150px;height:29px;background:#808080"></div>
<div style="left:710px;top:308px;width:150px;height:1px;background:#c8c8c8"></div>
<div style="left:710px;top:309px;width:150px;height:15px;background:#fff"></div>
<div style="left:790px;top:309px;width:1px;height:15px;background:#c8c8c8"></div>
<span class="t" style="left:710px;top:310px;width:81px;text-align:center;letter-spacing:0.3px;font-size:11px;transform:scaleY(1.12);transform-origin:0 10px;color:#000">Время:</span>
<span class="t" style="left:795px;top:310px;letter-spacing:0.1px;font-size:11px;transform:scaleY(1.12);transform-origin:0 10px;color:#000">Записано:</span>
<div style="left:710px;top:324px;width:150px;height:1px;background:#c8c8c8"></div>
<div style="left:710px;top:325px;width:80px;height:53px;background:#fff"></div>
<div style="left:791px;top:325px;width:69px;height:53px;background:#e0fce0"></div>
<svg style="position:absolute;left:819px;top:341px" width="11" height="20" shape-rendering="crispEdges"><g fill="#000"><rect x="2" y="0" width="7" height="2"/><rect x="0" y="2" width="3" height="16"/><rect x="8" y="2" width="3" height="16"/><rect x="2" y="18" width="7" height="2"/></g></svg>
<div style="left:860px;top:258px;width:1px;height:121px;background:#d0d0d0"></div>
<div style="left:710px;top:378px;width:151px;height:1px;background:#d0d0d0"></div>
<div style="left:861px;top:258px;width:150px;height:120px;background:#fff"></div>
<div style="left:861px;top:271px;width:150px;height:3px;background:#c8c8c8"></div>
<div style="left:898px;top:274px;width:1px;height:2px;background:#b0b0b0"></div>
<span class="t" style="left:895.0px;top:258px;width:7px;text-align:center;font-size:11px;transform:scaleY(1.12);transform-origin:0 0;color:#000">6</span>
<div style="left:936px;top:274px;width:1px;height:2px;background:#b0b0b0"></div>
<span class="t" style="left:929.5px;top:258px;width:13px;text-align:center;font-size:11px;transform:scaleY(1.12);transform-origin:0 0;color:#000">12</span>
<div style="left:973px;top:274px;width:1px;height:2px;background:#b0b0b0"></div>
<span class="t" style="left:967.0px;top:258px;width:13px;text-align:center;font-size:11px;transform:scaleY(1.12);transform-origin:0 0;color:#000">18</span>
<div style="left:861px;top:278px;width:150px;height:1px;background:#c8c8c8"></div>
<svg style="position:absolute;left:861px;top:258px" width="17" height="17" viewBox="0 0 17 17">
<path d="M3.5 1.5 L11.5 1.5 L15 5 L15 15.5 L3.5 15.5 Z" fill="#eef4fc" stroke="#7070b4" stroke-width="0.9"/>
<path d="M11 1.5 L15 5.5 L15 9 L11 6 Z" fill="#5a84c8"/>
<path d="M1.5 1.5 L5 1.5 L5.8 3 L10.5 3 L10.5 8.5 L1.5 8.5 Z" fill="#f2c848" stroke="#b48418" stroke-width="0.9"/>
<rect x="2.3" y="4" width="7.5" height="1.6" fill="#fae690"/>
<circle cx="12.6" cy="12.4" r="3.9" fill="#eef8f8" stroke="#7c2430" stroke-width="1.1"/>
<path d="M11.6 13.4 L14 11" stroke="#184848" stroke-width="1.6"/>
</svg>
<div style="left:861px;top:279px;width:150px;height:29px;background:#808080"></div>
<div style="left:861px;top:308px;width:150px;height:1px;background:#c8c8c8"></div>
<div style="left:861px;top:309px;width:150px;height:15px;background:#fff"></div>
<div style="left:941px;top:309px;width:1px;height:15px;background:#c8c8c8"></div>
<span class="t" style="left:861px;top:310px;width:81px;text-align:center;letter-spacing:0.3px;font-size:11px;transform:scaleY(1.12);transform-origin:0 10px;color:#000">Время:</span>
<span class="t" style="left:946px;top:310px;letter-spacing:0.1px;font-size:11px;transform:scaleY(1.12);transform-origin:0 10px;color:#000">Записано:</span>
<div style="left:861px;top:324px;width:150px;height:1px;background:#c8c8c8"></div>
<div style="left:861px;top:325px;width:80px;height:53px;background:#fff"></div>
<div style="left:942px;top:325px;width:69px;height:53px;background:#e0fce0"></div>
<svg style="position:absolute;left:970px;top:341px" width="11" height="20" shape-rendering="crispEdges"><g fill="#000"><rect x="2" y="0" width="7" height="2"/><rect x="0" y="2" width="3" height="16"/><rect x="8" y="2" width="3" height="16"/><rect x="2" y="18" width="7" height="2"/></g></svg>
<div style="left:1011px;top:258px;width:1px;height:121px;background:#d0d0d0"></div>
<div style="left:861px;top:378px;width:151px;height:1px;background:#d0d0d0"></div>
<div style="left:1012px;top:258px;width:150px;height:120px;background:#fff"></div>
<div style="left:1012px;top:271px;width:150px;height:3px;background:#c8c8c8"></div>
<div style="left:1049px;top:274px;width:1px;height:2px;background:#b0b0b0"></div>
<span class="t" style="left:1046.0px;top:258px;width:7px;text-align:center;font-size:11px;transform:scaleY(1.12);transform-origin:0 0;color:#000">6</span>
<div style="left:1087px;top:274px;width:1px;height:2px;background:#b0b0b0"></div>
<span class="t" style="left:1080.5px;top:258px;width:13px;text-align:center;font-size:11px;transform:scaleY(1.12);transform-origin:0 0;color:#000">12</span>
<div style="left:1124px;top:274px;width:1px;height:2px;background:#b0b0b0"></div>
<span class="t" style="left:1118.0px;top:258px;width:13px;text-align:center;font-size:11px;transform:scaleY(1.12);transform-origin:0 0;color:#000">18</span>
<div style="left:1012px;top:278px;width:150px;height:1px;background:#c8c8c8"></div>
<svg style="position:absolute;left:1012px;top:258px" width="17" height="17" viewBox="0 0 17 17">
<path d="M3.5 1.5 L11.5 1.5 L15 5 L15 15.5 L3.5 15.5 Z" fill="#eef4fc" stroke="#7070b4" stroke-width="0.9"/>
<path d="M11 1.5 L15 5.5 L15 9 L11 6 Z" fill="#5a84c8"/>
<path d="M1.5 1.5 L5 1.5 L5.8 3 L10.5 3 L10.5 8.5 L1.5 8.5 Z" fill="#f2c848" stroke="#b48418" stroke-width="0.9"/>
<rect x="2.3" y="4" width="7.5" height="1.6" fill="#fae690"/>
<circle cx="12.6" cy="12.4" r="3.9" fill="#eef8f8" stroke="#7c2430" stroke-width="1.1"/>
<path d="M11.6 13.4 L14 11" stroke="#184848" stroke-width="1.6"/>
</svg>
<div style="left:1012px;top:279px;width:150px;height:29px;background:#808080"></div>
<div style="left:1012px;top:308px;width:150px;height:1px;background:#c8c8c8"></div>
<div style="left:1012px;top:309px;width:150px;height:15px;background:#fff"></div>
<div style="left:1092px;top:309px;width:1px;height:15px;background:#c8c8c8"></div>
<span class="t" style="left:1012px;top:310px;width:81px;text-align:center;letter-spacing:0.3px;font-size:11px;transform:scaleY(1.12);transform-origin:0 10px;color:#000">Время:</span>
<span class="t" style="left:1097px;top:310px;letter-spacing:0.1px;font-size:11px;transform:scaleY(1.12);transform-origin:0 10px;color:#000">Записано:</span>
<div style="left:1012px;top:324px;width:150px;height:1px;background:#c8c8c8"></div>
<div style="left:1012px;top:325px;width:80px;height:53px;background:#fff"></div>
<div style="left:1093px;top:325px;width:69px;height:53px;background:#e0fce0"></div>
<svg style="position:absolute;left:1121px;top:341px" width="11" height="20" shape-rendering="crispEdges"><g fill="#000"><rect x="2" y="0" width="7" height="2"/><rect x="0" y="2" width="3" height="16"/><rect x="8" y="2" width="3" height="16"/><rect x="2" y="18" width="7" height="2"/></g></svg>
<div style="left:1162px;top:258px;width:1px;height:121px;background:#d0d0d0"></div>
<div style="left:1012px;top:378px;width:151px;height:1px;background:#d0d0d0"></div>
<div style="left:106px;top:379px;width:150px;height:120px;background:#fff"></div>
<div style="left:106px;top:392px;width:150px;height:3px;background:#c8c8c8"></div>
<div style="left:143px;top:395px;width:1px;height:2px;background:#b0b0b0"></div>
<span class="t" style="left:140.0px;top:379px;width:7px;text-align:center;font-size:11px;transform:scaleY(1.12);transform-origin:0 0;color:#000">6</span>
<div style="left:181px;top:395px;width:1px;height:2px;background:#b0b0b0"></div>
<span class="t" style="left:174.5px;top:379px;width:13px;text-align:center;font-size:11px;transform:scaleY(1.12);transform-origin:0 0;color:#000">12</span>
<div style="left:218px;top:395px;width:1px;height:2px;background:#b0b0b0"></div>
<span class="t" style="left:212.0px;top:379px;width:13px;text-align:center;font-size:11px;transform:scaleY(1.12);transform-origin:0 0;color:#000">18</span>
<div style="left:106px;top:399px;width:150px;height:1px;background:#c8c8c8"></div>
<svg style="position:absolute;left:106px;top:379px" width="17" height="17" viewBox="0 0 17 17">
<path d="M3.5 1.5 L11.5 1.5 L15 5 L15 15.5 L3.5 15.5 Z" fill="#eef4fc" stroke="#7070b4" stroke-width="0.9"/>
<path d="M11 1.5 L15 5.5 L15 9 L11 6 Z" fill="#5a84c8"/>
<path d="M1.5 1.5 L5 1.5 L5.8 3 L10.5 3 L10.5 8.5 L1.5 8.5 Z" fill="#f2c848" stroke="#b48418" stroke-width="0.9"/>
<rect x="2.3" y="4" width="7.5" height="1.6" fill="#fae690"/>
<circle cx="12.6" cy="12.4" r="3.9" fill="#eef8f8" stroke="#7c2430" stroke-width="1.1"/>
<path d="M11.6 13.4 L14 11" stroke="#184848" stroke-width="1.6"/>
</svg>
<div style="left:106px;top:400px;width:150px;height:29px;background:#808080"></div>
<div style="left:106px;top:429px;width:150px;height:1px;background:#c8c8c8"></div>
<div style="left:106px;top:430px;width:150px;height:15px;background:#fff"></div>
<div style="left:186px;top:430px;width:1px;height:15px;background:#c8c8c8"></div>
<span class="t" style="left:106px;top:431px;width:81px;text-align:center;letter-spacing:0.3px;font-size:11px;transform:scaleY(1.12);transform-origin:0 10px;color:#000">Время:</span>
<span class="t" style="left:191px;top:431px;letter-spacing:0.1px;font-size:11px;transform:scaleY(1.12);transform-origin:0 10px;color:#000">Записано:</span>
<div style="left:106px;top:445px;width:150px;height:1px;background:#c8c8c8"></div>
<div style="left:106px;top:446px;width:80px;height:53px;background:#fff"></div>
<div style="left:187px;top:446px;width:69px;height:53px;background:#e0fce0"></div>
<svg style="position:absolute;left:215px;top:462px" width="11" height="20" shape-rendering="crispEdges"><g fill="#000"><rect x="2" y="0" width="7" height="2"/><rect x="0" y="2" width="3" height="16"/><rect x="8" y="2" width="3" height="16"/><rect x="2" y="18" width="7" height="2"/></g></svg>
<div style="left:256px;top:379px;width:1px;height:121px;background:#d0d0d0"></div>
<div style="left:106px;top:499px;width:151px;height:1px;background:#d0d0d0"></div>
<div style="left:257px;top:379px;width:150px;height:120px;background:#fff"></div>
<div style="left:257px;top:392px;width:150px;height:3px;background:#c8c8c8"></div>
<div style="left:294px;top:395px;width:1px;height:2px;background:#b0b0b0"></div>
<span class="t" style="left:291.0px;top:379px;width:7px;text-align:center;font-size:11px;transform:scaleY(1.12);transform-origin:0 0;color:#000">6</span>
<div style="left:332px;top:395px;width:1px;height:2px;background:#b0b0b0"></div>
<span class="t" style="left:325.5px;top:379px;width:13px;text-align:center;font-size:11px;transform:scaleY(1.12);transform-origin:0 0;color:#000">12</span>
<div style="left:369px;top:395px;width:1px;height:2px;background:#b0b0b0"></div>
<span class="t" style="left:363.0px;top:379px;width:13px;text-align:center;font-size:11px;transform:scaleY(1.12);transform-origin:0 0;color:#000">18</span>
<div style="left:257px;top:399px;width:150px;height:1px;background:#c8c8c8"></div>
<svg style="position:absolute;left:257px;top:379px" width="17" height="17" viewBox="0 0 17 17">
<path d="M3.5 1.5 L11.5 1.5 L15 5 L15 15.5 L3.5 15.5 Z" fill="#eef4fc" stroke="#7070b4" stroke-width="0.9"/>
<path d="M11 1.5 L15 5.5 L15 9 L11 6 Z" fill="#5a84c8"/>
<path d="M1.5 1.5 L5 1.5 L5.8 3 L10.5 3 L10.5 8.5 L1.5 8.5 Z" fill="#f2c848" stroke="#b48418" stroke-width="0.9"/>
<rect x="2.3" y="4" width="7.5" height="1.6" fill="#fae690"/>
<circle cx="12.6" cy="12.4" r="3.9" fill="#eef8f8" stroke="#7c2430" stroke-width="1.1"/>
<path d="M11.6 13.4 L14 11" stroke="#184848" stroke-width="1.6"/>
</svg>
<div style="left:257px;top:400px;width:150px;height:29px;background:#808080"></div>
<div style="left:257px;top:429px;width:150px;height:1px;background:#c8c8c8"></div>
<div style="left:257px;top:430px;width:150px;height:15px;background:#fff"></div>
<div style="left:337px;top:430px;width:1px;height:15px;background:#c8c8c8"></div>
<span class="t" style="left:257px;top:431px;width:81px;text-align:center;letter-spacing:0.3px;font-size:11px;transform:scaleY(1.12);transform-origin:0 10px;color:#000">Время:</span>
<span class="t" style="left:342px;top:431px;letter-spacing:0.1px;font-size:11px;transform:scaleY(1.12);transform-origin:0 10px;color:#000">Записано:</span>
<div style="left:257px;top:445px;width:150px;height:1px;background:#c8c8c8"></div>
<div style="left:257px;top:446px;width:80px;height:53px;background:#fff"></div>
<div style="left:338px;top:446px;width:69px;height:53px;background:#e0fce0"></div>
<svg style="position:absolute;left:366px;top:462px" width="11" height="20" shape-rendering="crispEdges"><g fill="#000"><rect x="2" y="0" width="7" height="2"/><rect x="0" y="2" width="3" height="16"/><rect x="8" y="2" width="3" height="16"/><rect x="2" y="18" width="7" height="2"/></g></svg>
<div style="left:407px;top:379px;width:1px;height:121px;background:#d0d0d0"></div>
<div style="left:257px;top:499px;width:151px;height:1px;background:#d0d0d0"></div>
<div style="left:408px;top:379px;width:150px;height:120px;background:#fff"></div>
<div style="left:408px;top:392px;width:150px;height:3px;background:#c8c8c8"></div>
<div style="left:445px;top:395px;width:1px;height:2px;background:#b0b0b0"></div>
<span class="t" style="left:442.0px;top:379px;width:7px;text-align:center;font-size:11px;transform:scaleY(1.12);transform-origin:0 0;color:#000">6</span>
<div style="left:483px;top:395px;width:1px;height:2px;background:#b0b0b0"></div>
<span class="t" style="left:476.5px;top:379px;width:13px;text-align:center;font-size:11px;transform:scaleY(1.12);transform-origin:0 0;color:#000">12</span>
<div style="left:520px;top:395px;width:1px;height:2px;background:#b0b0b0"></div>
<span class="t" style="left:514.0px;top:379px;width:13px;text-align:center;font-size:11px;transform:scaleY(1.12);transform-origin:0 0;color:#000">18</span>
<div style="left:408px;top:399px;width:150px;height:1px;background:#c8c8c8"></div>
<svg style="position:absolute;left:408px;top:379px" width="17" height="17" viewBox="0 0 17 17">
<path d="M3.5 1.5 L11.5 1.5 L15 5 L15 15.5 L3.5 15.5 Z" fill="#eef4fc" stroke="#7070b4" stroke-width="0.9"/>
<path d="M11 1.5 L15 5.5 L15 9 L11 6 Z" fill="#5a84c8"/>
<path d="M1.5 1.5 L5 1.5 L5.8 3 L10.5 3 L10.5 8.5 L1.5 8.5 Z" fill="#f2c848" stroke="#b48418" stroke-width="0.9"/>
<rect x="2.3" y="4" width="7.5" height="1.6" fill="#fae690"/>
<circle cx="12.6" cy="12.4" r="3.9" fill="#eef8f8" stroke="#7c2430" stroke-width="1.1"/>
<path d="M11.6 13.4 L14 11" stroke="#184848" stroke-width="1.6"/>
</svg>
<div style="left:408px;top:400px;width:150px;height:29px;background:#808080"></div>
<div style="left:408px;top:429px;width:150px;height:1px;background:#c8c8c8"></div>
<div style="left:408px;top:430px;width:150px;height:15px;background:#fff"></div>
<div style="left:488px;top:430px;width:1px;height:15px;background:#c8c8c8"></div>
<span class="t" style="left:408px;top:431px;width:81px;text-align:center;letter-spacing:0.3px;font-size:11px;transform:scaleY(1.12);transform-origin:0 10px;color:#000">Время:</span>
<span class="t" style="left:493px;top:431px;letter-spacing:0.1px;font-size:11px;transform:scaleY(1.12);transform-origin:0 10px;color:#000">Записано:</span>
<div style="left:408px;top:445px;width:150px;height:1px;background:#c8c8c8"></div>
<div style="left:408px;top:446px;width:80px;height:53px;background:#fff"></div>
<div style="left:489px;top:446px;width:69px;height:53px;background:#e0fce0"></div>
<svg style="position:absolute;left:517px;top:462px" width="11" height="20" shape-rendering="crispEdges"><g fill="#000"><rect x="2" y="0" width="7" height="2"/><rect x="0" y="2" width="3" height="16"/><rect x="8" y="2" width="3" height="16"/><rect x="2" y="18" width="7" height="2"/></g></svg>
<div style="left:558px;top:379px;width:1px;height:121px;background:#d0d0d0"></div>
<div style="left:408px;top:499px;width:151px;height:1px;background:#d0d0d0"></div>
<div style="left:559px;top:379px;width:150px;height:120px;background:#fff"></div>
<div style="left:559px;top:392px;width:150px;height:3px;background:#c8c8c8"></div>
<div style="left:596px;top:395px;width:1px;height:2px;background:#b0b0b0"></div>
<span class="t" style="left:593.0px;top:379px;width:7px;text-align:center;font-size:11px;transform:scaleY(1.12);transform-origin:0 0;color:#000">6</span>
<div style="left:634px;top:395px;width:1px;height:2px;background:#b0b0b0"></div>
<span class="t" style="left:627.5px;top:379px;width:13px;text-align:center;font-size:11px;transform:scaleY(1.12);transform-origin:0 0;color:#000">12</span>
<div style="left:671px;top:395px;width:1px;height:2px;background:#b0b0b0"></div>
<span class="t" style="left:665.0px;top:379px;width:13px;text-align:center;font-size:11px;transform:scaleY(1.12);transform-origin:0 0;color:#000">18</span>
<div style="left:559px;top:399px;width:150px;height:1px;background:#c8c8c8"></div>
<svg style="position:absolute;left:559px;top:379px" width="17" height="17" viewBox="0 0 17 17">
<path d="M3.5 1.5 L11.5 1.5 L15 5 L15 15.5 L3.5 15.5 Z" fill="#eef4fc" stroke="#7070b4" stroke-width="0.9"/>
<path d="M11 1.5 L15 5.5 L15 9 L11 6 Z" fill="#5a84c8"/>
<path d="M1.5 1.5 L5 1.5 L5.8 3 L10.5 3 L10.5 8.5 L1.5 8.5 Z" fill="#f2c848" stroke="#b48418" stroke-width="0.9"/>
<rect x="2.3" y="4" width="7.5" height="1.6" fill="#fae690"/>
<circle cx="12.6" cy="12.4" r="3.9" fill="#eef8f8" stroke="#7c2430" stroke-width="1.1"/>
<path d="M11.6 13.4 L14 11" stroke="#184848" stroke-width="1.6"/>
</svg>
<div style="left:559px;top:400px;width:150px;height:29px;background:#808080"></div>
<div style="left:559px;top:429px;width:150px;height:1px;background:#c8c8c8"></div>
<div style="left:559px;top:430px;width:150px;height:15px;background:#fff"></div>
<div style="left:639px;top:430px;width:1px;height:15px;background:#c8c8c8"></div>
<span class="t" style="left:559px;top:431px;width:81px;text-align:center;letter-spacing:0.3px;font-size:11px;transform:scaleY(1.12);transform-origin:0 10px;color:#000">Время:</span>
<span class="t" style="left:644px;top:431px;letter-spacing:0.1px;font-size:11px;transform:scaleY(1.12);transform-origin:0 10px;color:#000">Записано:</span>
<div style="left:559px;top:445px;width:150px;height:1px;background:#c8c8c8"></div>
<div style="left:559px;top:446px;width:80px;height:53px;background:#fff"></div>
<div style="left:640px;top:446px;width:69px;height:53px;background:#e0fce0"></div>
<svg style="position:absolute;left:668px;top:462px" width="11" height="20" shape-rendering="crispEdges"><g fill="#000"><rect x="2" y="0" width="7" height="2"/><rect x="0" y="2" width="3" height="16"/><rect x="8" y="2" width="3" height="16"/><rect x="2" y="18" width="7" height="2"/></g></svg>
<div style="left:709px;top:379px;width:1px;height:121px;background:#d0d0d0"></div>
<div style="left:559px;top:499px;width:151px;height:1px;background:#d0d0d0"></div>
<div style="left:710px;top:379px;width:150px;height:120px;background:#fff"></div>
<div style="left:710px;top:392px;width:150px;height:3px;background:#c8c8c8"></div>
<div style="left:747px;top:395px;width:1px;height:2px;background:#b0b0b0"></div>
<span class="t" style="left:744.0px;top:379px;width:7px;text-align:center;font-size:11px;transform:scaleY(1.12);transform-origin:0 0;color:#000">6</span>
<div style="left:785px;top:395px;width:1px;height:2px;background:#b0b0b0"></div>
<span class="t" style="left:778.5px;top:379px;width:13px;text-align:center;font-size:11px;transform:scaleY(1.12);transform-origin:0 0;color:#000">12</span>
<div style="left:822px;top:395px;width:1px;height:2px;background:#b0b0b0"></div>
<span class="t" style="left:816.0px;top:379px;width:13px;text-align:center;font-size:11px;transform:scaleY(1.12);transform-origin:0 0;color:#000">18</span>
<div style="left:710px;top:399px;width:150px;height:1px;background:#c8c8c8"></div>
<svg style="position:absolute;left:710px;top:379px" width="17" height="17" viewBox="0 0 17 17">
<path d="M3.5 1.5 L11.5 1.5 L15 5 L15 15.5 L3.5 15.5 Z" fill="#eef4fc" stroke="#7070b4" stroke-width="0.9"/>
<path d="M11 1.5 L15 5.5 L15 9 L11 6 Z" fill="#5a84c8"/>
<path d="M1.5 1.5 L5 1.5 L5.8 3 L10.5 3 L10.5 8.5 L1.5 8.5 Z" fill="#f2c848" stroke="#b48418" stroke-width="0.9"/>
<rect x="2.3" y="4" width="7.5" height="1.6" fill="#fae690"/>
<circle cx="12.6" cy="12.4" r="3.9" fill="#eef8f8" stroke="#7c2430" stroke-width="1.1"/>
<path d="M11.6 13.4 L14 11" stroke="#184848" stroke-width="1.6"/>
</svg>
<div style="left:710px;top:400px;width:150px;height:29px;background:#808080"></div>
<div style="left:710px;top:429px;width:150px;height:1px;background:#c8c8c8"></div>
<div style="left:710px;top:430px;width:150px;height:15px;background:#fff"></div>
<div style="left:790px;top:430px;width:1px;height:15px;background:#c8c8c8"></div>
<span class="t" style="left:710px;top:431px;width:81px;text-align:center;letter-spacing:0.3px;font-size:11px;transform:scaleY(1.12);transform-origin:0 10px;color:#000">Время:</span>
<span class="t" style="left:795px;top:431px;letter-spacing:0.1px;font-size:11px;transform:scaleY(1.12);transform-origin:0 10px;color:#000">Записано:</span>
<div style="left:710px;top:445px;width:150px;height:1px;background:#c8c8c8"></div>
<div style="left:710px;top:446px;width:80px;height:53px;background:#fff"></div>
<div style="left:791px;top:446px;width:69px;height:53px;background:#e0fce0"></div>
<svg style="position:absolute;left:819px;top:462px" width="11" height="20" shape-rendering="crispEdges"><g fill="#000"><rect x="2" y="0" width="7" height="2"/><rect x="0" y="2" width="3" height="16"/><rect x="8" y="2" width="3" height="16"/><rect x="2" y="18" width="7" height="2"/></g></svg>
<div style="left:860px;top:379px;width:1px;height:121px;background:#d0d0d0"></div>
<div style="left:710px;top:499px;width:151px;height:1px;background:#d0d0d0"></div>
<div style="left:861px;top:379px;width:150px;height:120px;background:#fff"></div>
<div style="left:861px;top:392px;width:150px;height:3px;background:#c8c8c8"></div>
<div style="left:898px;top:395px;width:1px;height:2px;background:#b0b0b0"></div>
<span class="t" style="left:895.0px;top:379px;width:7px;text-align:center;font-size:11px;transform:scaleY(1.12);transform-origin:0 0;color:#000">6</span>
<div style="left:936px;top:395px;width:1px;height:2px;background:#b0b0b0"></div>
<span class="t" style="left:929.5px;top:379px;width:13px;text-align:center;font-size:11px;transform:scaleY(1.12);transform-origin:0 0;color:#000">12</span>
<div style="left:973px;top:395px;width:1px;height:2px;background:#b0b0b0"></div>
<span class="t" style="left:967.0px;top:379px;width:13px;text-align:center;font-size:11px;transform:scaleY(1.12);transform-origin:0 0;color:#000">18</span>
<div style="left:861px;top:399px;width:150px;height:1px;background:#c8c8c8"></div>
<svg style="position:absolute;left:861px;top:379px" width="17" height="17" viewBox="0 0 17 17">
<path d="M3.5 1.5 L11.5 1.5 L15 5 L15 15.5 L3.5 15.5 Z" fill="#eef4fc" stroke="#7070b4" stroke-width="0.9"/>
<path d="M11 1.5 L15 5.5 L15 9 L11 6 Z" fill="#5a84c8"/>
<path d="M1.5 1.5 L5 1.5 L5.8 3 L10.5 3 L10.5 8.5 L1.5 8.5 Z" fill="#f2c848" stroke="#b48418" stroke-width="0.9"/>
<rect x="2.3" y="4" width="7.5" height="1.6" fill="#fae690"/>
<circle cx="12.6" cy="12.4" r="3.9" fill="#eef8f8" stroke="#7c2430" stroke-width="1.1"/>
<path d="M11.6 13.4 L14 11" stroke="#184848" stroke-width="1.6"/>
</svg>
<div style="left:861px;top:400px;width:150px;height:29px;background:#808080"></div>
<div style="left:861px;top:429px;width:150px;height:1px;background:#c8c8c8"></div>
<div style="left:861px;top:430px;width:150px;height:15px;background:#fff"></div>
<div style="left:941px;top:430px;width:1px;height:15px;background:#c8c8c8"></div>
<span class="t" style="left:861px;top:431px;width:81px;text-align:center;letter-spacing:0.3px;font-size:11px;transform:scaleY(1.12);transform-origin:0 10px;color:#000">Время:</span>
<span class="t" style="left:946px;top:431px;letter-spacing:0.1px;font-size:11px;transform:scaleY(1.12);transform-origin:0 10px;color:#000">Записано:</span>
<div style="left:861px;top:445px;width:150px;height:1px;background:#c8c8c8"></div>
<div style="left:861px;top:446px;width:80px;height:53px;background:#fff"></div>
<div style="left:942px;top:446px;width:69px;height:53px;background:#e0fce0"></div>
<svg style="position:absolute;left:970px;top:462px" width="11" height="20" shape-rendering="crispEdges"><g fill="#000"><rect x="2" y="0" width="7" height="2"/><rect x="0" y="2" width="3" height="16"/><rect x="8" y="2" width="3" height="16"/><rect x="2" y="18" width="7" height="2"/></g></svg>
<div style="left:1011px;top:379px;width:1px;height:121px;background:#d0d0d0"></div>
<div style="left:861px;top:499px;width:151px;height:1px;background:#d0d0d0"></div>
<div style="left:1012px;top:379px;width:150px;height:120px;background:#fff"></div>
<div style="left:1012px;top:392px;width:150px;height:3px;background:#c8c8c8"></div>
<div style="left:1049px;top:395px;width:1px;height:2px;background:#b0b0b0"></div>
<span class="t" style="left:1046.0px;top:379px;width:7px;text-align:center;font-size:11px;transform:scaleY(1.12);transform-origin:0 0;color:#000">6</span>
<div style="left:1087px;top:395px;width:1px;height:2px;background:#b0b0b0"></div>
<span class="t" style="left:1080.5px;top:379px;width:13px;text-align:center;font-size:11px;transform:scaleY(1.12);transform-origin:0 0;color:#000">12</span>
<div style="left:1124px;top:395px;width:1px;height:2px;background:#b0b0b0"></div>
<span class="t" style="left:1118.0px;top:379px;width:13px;text-align:center;font-size:11px;transform:scaleY(1.12);transform-origin:0 0;color:#000">18</span>
<div style="left:1012px;top:399px;width:150px;height:1px;background:#c8c8c8"></div>
<svg style="position:absolute;left:1012px;top:379px" width="17" height="17" viewBox="0 0 17 17">
<path d="M3.5 1.5 L11.5 1.5 L15 5 L15 15.5 L3.5 15.5 Z" fill="#eef4fc" stroke="#7070b4" stroke-width="0.9"/>
<path d="M11 1.5 L15 5.5 L15 9 L11 6 Z" fill="#5a84c8"/>
<path d="M1.5 1.5 L5 1.5 L5.8 3 L10.5 3 L10.5 8.5 L1.5 8.5 Z" fill="#f2c848" stroke="#b48418" stroke-width="0.9"/>
<rect x="2.3" y="4" width="7.5" height="1.6" fill="#fae690"/>
<circle cx="12.6" cy="12.4" r="3.9" fill="#eef8f8" stroke="#7c2430" stroke-width="1.1"/>
<path d="M11.6 13.4 L14 11" stroke="#184848" stroke-width="1.6"/>
</svg>
<div style="left:1012px;top:400px;width:150px;height:29px;background:#808080"></div>
<div style="left:1012px;top:429px;width:150px;height:1px;background:#c8c8c8"></div>
<div style="left:1012px;top:430px;width:150px;height:15px;background:#fff"></div>
<div style="left:1092px;top:430px;width:1px;height:15px;background:#c8c8c8"></div>
<span class="t" style="left:1012px;top:431px;width:81px;text-align:center;letter-spacing:0.3px;font-size:11px;transform:scaleY(1.12);transform-origin:0 10px;color:#000">Время:</span>
<span class="t" style="left:1097px;top:431px;letter-spacing:0.1px;font-size:11px;transform:scaleY(1.12);transform-origin:0 10px;color:#000">Записано:</span>
<div style="left:1012px;top:445px;width:150px;height:1px;background:#c8c8c8"></div>
<div style="left:1012px;top:446px;width:80px;height:53px;background:#fff"></div>
<div style="left:1093px;top:446px;width:69px;height:53px;background:#e0fce0"></div>
<svg style="position:absolute;left:1121px;top:462px" width="11" height="20" shape-rendering="crispEdges"><g fill="#000"><rect x="2" y="0" width="7" height="2"/><rect x="0" y="2" width="3" height="16"/><rect x="8" y="2" width="3" height="16"/><rect x="2" y="18" width="7" height="2"/></g></svg>
<div style="left:1162px;top:379px;width:1px;height:121px;background:#d0d0d0"></div>
<div style="left:1012px;top:499px;width:151px;height:1px;background:#d0d0d0"></div>
<div style="left:1163px;top:85px;width:34px;height:415px;background:#fff"></div>
<div style="left:1179px;top:86px;width:16px;height:414px;background:#f0f0f0"></div>
<svg style="position:absolute;left:1179px;top:86px" width="16" height="16"><path d="M4.3 11.2 L7.5 7.6 L10.7 11.2" stroke="#505050" stroke-width="2.2" fill="none"/></svg>
<div style="left:1179px;top:103px;width:16px;height:17px;background:#cdcdcd"></div>
<div style="left:1195px;top:86px;width:1px;height:414px;background:#f0f0f0"></div>
<div style="left:1196px;top:0px;width:1px;height:500px;background:#a4a4a4"></div>
<div style="left:398px;top:164px;width:400px;height:250px;background:#666"></div>
<div style="left:398px;top:164px;width:399px;height:249px;background:#c4c4c4"></div>
<div style="left:399px;top:165px;width:397px;height:247px;background:#c0c0c0"></div>
<div style="left:399px;top:165px;width:397px;height:1px;background:#fff"></div>
<div style="left:399px;top:165px;width:1px;height:247px;background:#fff"></div>
<div style="left:400px;top:166px;width:396px;height:246px;background:#a0a0a0"></div>
<div style="left:401px;top:166px;width:394px;height:245px;background:#fff"></div>
<div style="left:400px;top:166px;width:396px;height:18px;background:linear-gradient(#545454,#3e3e3e)"></div>
<div style="left:400px;top:166px;width:22px;height:18px;background:linear-gradient(#626262,#525252)"></div>
<div style="left:422px;top:166px;width:1px;height:18px;background:#2c2c2c"></div>
<svg style="position:absolute;left:406px;top:170px" width="11" height="10" viewBox="0 0 11 10"><path d="M1.5 1.5 L9.5 8.5 M9.5 1.5 L1.5 8.5" stroke="#1e1e1e" stroke-width="4" stroke-linecap="butt"/><path d="M1.5 1.5 L9.5 8.5 M9.5 1.5 L1.5 8.5" stroke="#f4f4f4" stroke-width="2.4" stroke-linecap="butt"/></svg>
<span class="t" style="left:446px;top:169px;font-size:11px;font-weight:normal;color:#f2f2f2;transform:scaleY(1.12);transform-origin:0 10px;">Выбор клиники</span>
<div style="left:414px;top:194px;width:1px;height:81px;background:repeating-linear-gradient(#808080 0 1px,transparent 1px 2px)"></div>
<div style="left:416px;top:194px;width:8px;height:1px;background:repeating-linear-gradient(to right,#808080 0 1px,transparent 1px 2px)"></div>
<span class="t" style="left:426px;top:188px;font-size:11px;font-weight:normal;color:#000;transform:scaleY(1.12);transform-origin:0 10px;">Новая клиника</span>
<div style="left:416px;top:210px;width:8px;height:1px;background:repeating-linear-gradient(to right,#808080 0 1px,transparent 1px 2px)"></div>
<span class="t" style="left:426px;top:204px;font-size:11px;font-weight:normal;color:#000;transform:scaleY(1.12);transform-origin:0 10px;">ф-л ЖК Дубровка</span>
<div style="left:416px;top:226px;width:8px;height:1px;background:repeating-linear-gradient(to right,#808080 0 1px,transparent 1px 2px)"></div>
<span class="t" style="left:426px;top:220px;font-size:11px;font-weight:normal;color:#000;transform:scaleY(1.12);transform-origin:0 10px;">ф-л Ленинский123</span>
<div style="left:416px;top:242px;width:8px;height:1px;background:repeating-linear-gradient(to right,#808080 0 1px,transparent 1px 2px)"></div>
<div style="left:424px;top:234px;width:88px;height:16px;background:#0a64c8;outline:1px dotted #000;outline-offset:-1px"></div>
<span class="t" style="left:426px;top:236px;font-size:11px;font-weight:normal;color:#e8ffff;transform:scaleY(1.12);transform-origin:0 10px;letter-spacing:-0.25px">ф-л на Вернадке</span>
<div style="left:416px;top:258px;width:8px;height:1px;background:repeating-linear-gradient(to right,#808080 0 1px,transparent 1px 2px)"></div>
<span class="t" style="left:426px;top:252px;font-size:11px;font-weight:normal;color:#000;transform:scaleY(1.12);transform-origin:0 10px;">ф-л Тестовый</span>
<div style="left:416px;top:274px;width:8px;height:1px;background:repeating-linear-gradient(to right,#808080 0 1px,transparent 1px 2px)"></div>
<span class="t" style="left:426px;top:268px;font-size:11px;font-weight:normal;color:#000;transform:scaleY(1.12);transform-origin:0 10px;">ф-л Троицк</span>
</body></html>
